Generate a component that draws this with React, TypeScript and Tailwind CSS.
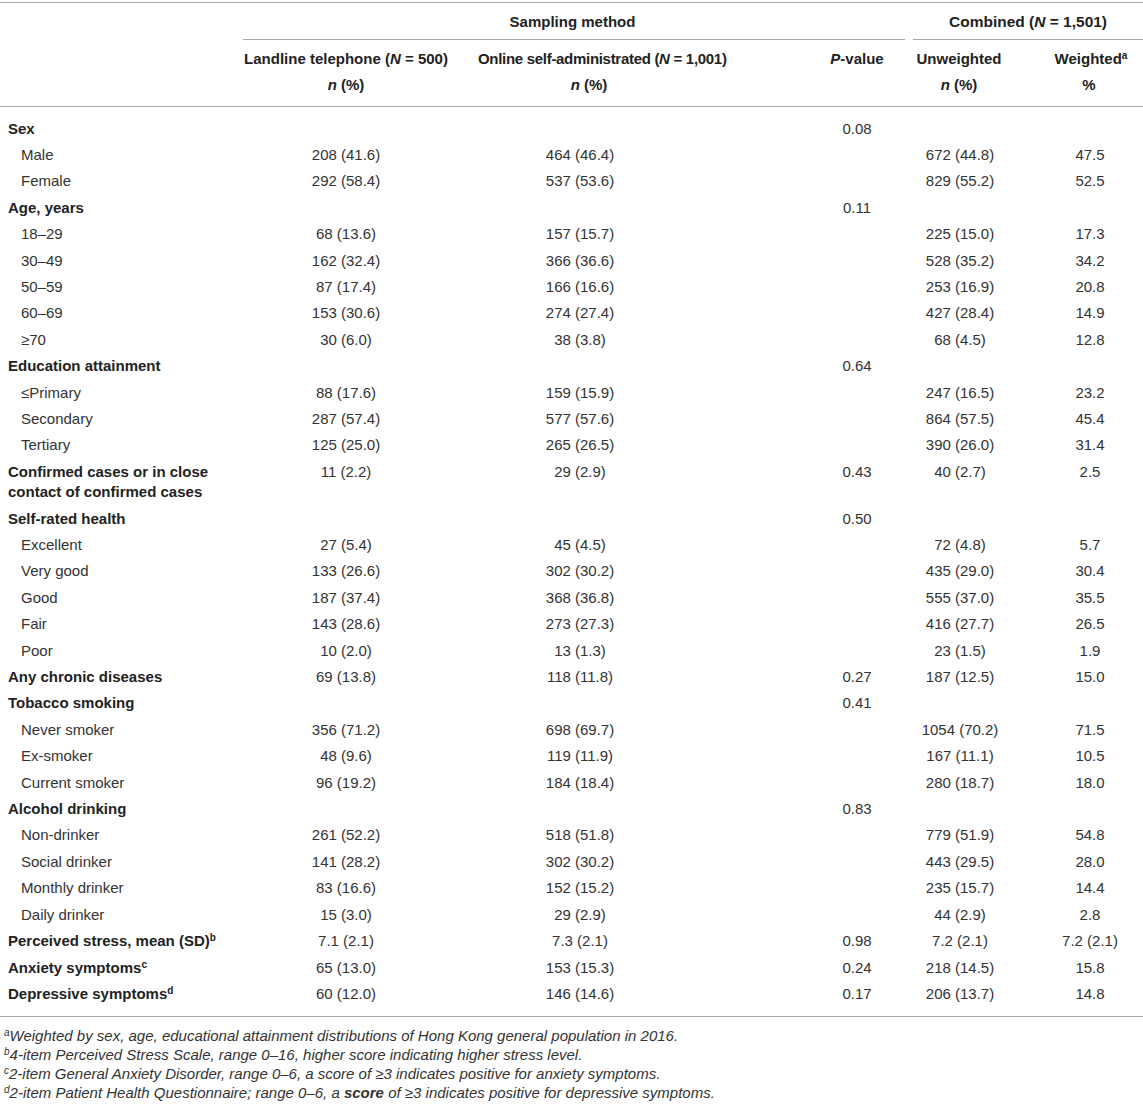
import React from "react";

type Row = { label: React.ReactNode; sub?: boolean; v?: string[]; p?: string };

const rows: Row[] = [
  { label: "Sex", p: "0.08" },
  { label: "Male", sub: true, v: ["208 (41.6)", "464 (46.4)", "672 (44.8)", "47.5"] },
  { label: "Female", sub: true, v: ["292 (58.4)", "537 (53.6)", "829 (55.2)", "52.5"] },
  { label: "Age, years", p: "0.11" },
  { label: "18–29", sub: true, v: ["68 (13.6)", "157 (15.7)", "225 (15.0)", "17.3"] },
  { label: "30–49", sub: true, v: ["162 (32.4)", "366 (36.6)", "528 (35.2)", "34.2"] },
  { label: "50–59", sub: true, v: ["87 (17.4)", "166 (16.6)", "253 (16.9)", "20.8"] },
  { label: "60–69", sub: true, v: ["153 (30.6)", "274 (27.4)", "427 (28.4)", "14.9"] },
  { label: "≥70", sub: true, v: ["30 (6.0)", "38 (3.8)", "68 (4.5)", "12.8"] },
  { label: "Education attainment", p: "0.64" },
  { label: "≤Primary", sub: true, v: ["88 (17.6)", "159 (15.9)", "247 (16.5)", "23.2"] },
  { label: "Secondary", sub: true, v: ["287 (57.4)", "577 (57.6)", "864 (57.5)", "45.4"] },
  { label: "Tertiary", sub: true, v: ["125 (25.0)", "265 (26.5)", "390 (26.0)", "31.4"] },
  { label: "Confirmed cases or in close contact of confirmed cases", p: "0.43", v: ["11 (2.2)", "29 (2.9)", "40 (2.7)", "2.5"] },
  { label: "Self-rated health", p: "0.50" },
  { label: "Excellent", sub: true, v: ["27 (5.4)", "45 (4.5)", "72 (4.8)", "5.7"] },
  { label: "Very good", sub: true, v: ["133 (26.6)", "302 (30.2)", "435 (29.0)", "30.4"] },
  { label: "Good", sub: true, v: ["187 (37.4)", "368 (36.8)", "555 (37.0)", "35.5"] },
  { label: "Fair", sub: true, v: ["143 (28.6)", "273 (27.3)", "416 (27.7)", "26.5"] },
  { label: "Poor", sub: true, v: ["10 (2.0)", "13 (1.3)", "23 (1.5)", "1.9"] },
  { label: "Any chronic diseases", p: "0.27", v: ["69 (13.8)", "118 (11.8)", "187 (12.5)", "15.0"] },
  { label: "Tobacco smoking", p: "0.41" },
  { label: "Never smoker", sub: true, v: ["356 (71.2)", "698 (69.7)", "1054 (70.2)", "71.5"] },
  { label: "Ex-smoker", sub: true, v: ["48 (9.6)", "119 (11.9)", "167 (11.1)", "10.5"] },
  { label: "Current smoker", sub: true, v: ["96 (19.2)", "184 (18.4)", "280 (18.7)", "18.0"] },
  { label: "Alcohol drinking", p: "0.83" },
  { label: "Non-drinker", sub: true, v: ["261 (52.2)", "518 (51.8)", "779 (51.9)", "54.8"] },
  { label: "Social drinker", sub: true, v: ["141 (28.2)", "302 (30.2)", "443 (29.5)", "28.0"] },
  { label: "Monthly drinker", sub: true, v: ["83 (16.6)", "152 (15.2)", "235 (15.7)", "14.4"] },
  { label: "Daily drinker", sub: true, v: ["15 (3.0)", "29 (2.9)", "44 (2.9)", "2.8"] },
  {
    label: (
      <>
        Perceived stress, mean (SD)<sup className="text-[10px]">b</sup>
      </>
    ),
    p: "0.98",
    v: ["7.1 (2.1)", "7.3 (2.1)", "7.2 (2.1)", "7.2 (2.1)"],
  },
  {
    label: (
      <>
        Anxiety symptoms<sup className="text-[10px]">c</sup>
      </>
    ),
    p: "0.24",
    v: ["65 (13.0)", "153 (15.3)", "218 (14.5)", "15.8"],
  },
  {
    label: (
      <>
        Depressive symptoms<sup className="text-[10px]">d</sup>
      </>
    ),
    p: "0.17",
    v: ["60 (12.0)", "146 (14.6)", "206 (13.7)", "14.8"],
  },
];

export default function App() {
  return (
    <div
      className="w-[1143px] bg-white text-[#333] pt-[2px]"
      style={{ fontFamily: '"Liberation Sans", Arial, sans-serif' }}
    >
      <table className="w-[1143px] border-collapse table-fixed text-[15px]">
        <colgroup>
          <col className="w-[240px]" />
          <col className="w-[212px]" />
          <col className="w-[268px]" />
          <col className="w-[189px]" />
          <col className="w-[108px]" />
          <col className="w-[126px]" />
        </colgroup>
        <thead className="text-[#222] font-bold">
          <tr className="border-t-[1.5px] border-[#a8a8a8]">
            <th className="h-[36px]"></th>
            <th colSpan={3} className="h-[36px] text-center leading-[20px] pr-[4px] pt-[2px]">
              Sampling method
            </th>
            <th colSpan={2} className="h-[36px] text-center leading-[20px] pl-[4px] pt-[2px] text-[15.5px]">
              Combined (<i>N</i> = 1,501)
            </th>
          </tr>
          <tr>
            <th className="p-0"></th>
            <th colSpan={3} className="p-0 pl-[3px] pr-[4px]">
              <div className="border-t-[1.5px] border-[#a8a8a8]"></div>
            </th>
            <th colSpan={2} className="p-0 pl-[4px]">
              <div className="border-t-[1.5px] border-[#a8a8a8]"></div>
            </th>
          </tr>
          <tr className="border-b-[1.5px] border-[#a8a8a8] align-top">
            <th></th>
            <th className="text-center leading-[26px] pt-[6px] pb-[8px] whitespace-nowrap">
              Landline telephone (<i>N</i> = 500)
              <br />
              <i>n</i> (%)
            </th>
            <th className="text-center leading-[26px] pt-[6px] pb-[8px] whitespace-nowrap pl-[26px]">
              <span className="tracking-[-0.3px]">
                Online self-administrated (<i>N</i> = 1,001)
              </span>
              <br />
              <span className="relative right-[10px]">
                <i>n</i> (%)
              </span>
            </th>
            <th className="text-center leading-[26px] pt-[6px] pb-[8px] pl-[85px]">
              <i>P</i>-value
            </th>
            <th className="text-center leading-[26px] pt-[6px] pb-[8px] pr-[8px]">
              Unweighted
              <br />
              <i>n</i> (%)
            </th>
            <th className="text-center leading-[26px] pt-[6px] pb-[8px] pl-[22px] whitespace-nowrap">
              Weighted<sup className="text-[10px]">a</sup>
              <br />
              <span className="relative right-[2px]">%</span>
            </th>
          </tr>
        </thead>
        <tbody className="border-b-[1.5px] border-[#a8a8a8]">
          {rows.map((r, i) => {
            const first = i === 0;
            const last = i === rows.length - 1;
            const pad = `${first ? "pt-[12px]" : "pt-[3px]"} ${last ? "pb-[12px]" : "pb-[3px]"}`;
            return (
              <tr key={i} className="align-top leading-[20.4px]">
                <td
                  className={`${pad} ${r.sub ? "pl-[21px] font-normal text-[#333]" : "pl-[8px] font-bold text-[#222]"} pr-[10px]`}
                >
                  {r.label}
                </td>
                <td className={`${pad} text-center`}>{r.v ? r.v[0] : ""}</td>
                <td className={`${pad} text-center pr-[12px]`}>{r.v ? r.v[1] : ""}</td>
                <td className={`${pad} text-center pl-[85px]`}>{r.p ?? ""}</td>
                <td className={`${pad} text-center pr-[6px]`}>{r.v ? r.v[2] : ""}</td>
                <td className={`${pad} text-center pl-[20px]`}>{r.v ? r.v[3] : ""}</td>
              </tr>
            );
          })}
        </tbody>
      </table>
      <div className="pl-[4px] pt-[9px] text-[15px] leading-[19px] italic text-[#333]">
        <div>
          <sup className="text-[10px]">a</sup>Weighted by sex, age, educational attainment distributions of Hong Kong general population in 2016.
        </div>
        <div>
          <sup className="text-[10px]">b</sup>4-item Perceived Stress Scale, range 0–16, higher score indicating higher stress level.
        </div>
        <div>
          <sup className="text-[10px]">c</sup>2-item General Anxiety Disorder, range 0–6, a score of ≥3 indicates positive for anxiety symptoms.
        </div>
        <div>
          <sup className="text-[10px]">d</sup>2-item Patient Health Questionnaire; range 0–6, a <b>score</b> of ≥3 indicates positive for depressive symptoms.
        </div>
      </div>
    </div>
  );
}
